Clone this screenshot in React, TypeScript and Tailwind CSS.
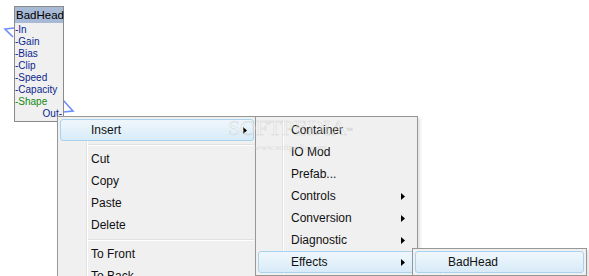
import React from 'react';

type Item = { label?: string; sep?: boolean; arrow?: boolean; active?: boolean };

const MAIN: Item[] = [
  { label: 'Insert', arrow: true, active: true },
  { sep: true },
  { label: 'Cut' },
  { label: 'Copy' },
  { label: 'Paste' },
  { label: 'Delete' },
  { sep: true },
  { label: 'To Front' },
  { label: 'To Back' },
];

const INSERT: Item[] = [
  { label: 'Container' },
  { label: 'IO Mod' },
  { label: 'Prefab...' },
  { label: 'Controls', arrow: true },
  { label: 'Conversion', arrow: true },
  { label: 'Diagnostic', arrow: true },
  { label: 'Effects', arrow: true, active: true },
];

const EFFECTS: Item[] = [{ label: 'BadHead', active: true }];

const PORTS = [
  { name: '-In', color: 'text-[#0c1f8e]' },
  { name: '-Gain', color: 'text-[#0c1f8e]' },
  { name: '-Bias', color: 'text-[#0c1f8e]' },
  { name: '-Clip', color: 'text-[#0c1f8e]' },
  { name: '-Speed', color: 'text-[#0c1f8e]' },
  { name: '-Capacity', color: 'text-[#0c1f8e]' },
  { name: '-Shape', color: 'text-[#138a13]' },
];

function Arrow() {
  return (
    <svg width="4" height="7" viewBox="0 0 4 7" className="shrink-0">
      <path d="M0 0 L4 3.5 L0 7 Z" fill="#000" />
    </svg>
  );
}

function Menu({ items, gutter, textPad, arrowPad, className }: {
  items: Item[];
  gutter: number;
  textPad: number;
  arrowPad: string;
  className: string;
}) {
  return (
    <div className={`absolute border border-[#979797] bg-[#f0f0f0] p-[2px] shadow-[2px_2px_3px_rgba(0,0,0,0.12)] ${className}`}>
      {/* gutter line */}
      <div className="absolute top-[2px] bottom-0 w-[2px] border-l border-[#e2e3e3]" style={{ left: gutter }}>
        <div className="h-full w-px bg-white" />
      </div>
      <div className="relative flex flex-col">
        {items.map((it, i) =>
          it.sep ? (
            <div key={i} className="flex h-[7px] items-center" style={{ paddingLeft: gutter }}>
              <div className="w-full border-t border-[#e0e0e0] border-b border-b-white" />
            </div>
          ) : (
            <div
              key={i}
              className={`flex h-[22px] items-center rounded-[3px] border ${
                it.active
                  ? 'border-[#a8d3ee] bg-gradient-to-b from-[#f0f7fc] to-[#d8ebf8]'
                  : 'border-transparent'
              }`}
            >
              <span
                className="flex-1 text-[12px] text-[#111] leading-none"
                style={{ paddingLeft: textPad, fontFamily: '"Liberation Sans", Arial, sans-serif' }}
              >
                {it.label}
              </span>
              {it.arrow && (
                <span className={arrowPad}>
                  <Arrow />
                </span>
              )}
            </div>
          )
        )}
      </div>
    </div>
  );
}

export default function App() {
  return (
    <div className="relative h-[276px] w-[589px] overflow-hidden bg-white">
      {/* connector wires */}
      <svg className="absolute left-0 top-0" width="80" height="120" viewBox="0 0 80 120">
        <polyline points="14,28 5,29 13,37" fill="none" stroke="#6d8cf5" strokeWidth="1.6" />
        <polyline points="63,100 73,111 63,112" fill="none" stroke="#6d8cf5" strokeWidth="1.6" />
      </svg>

      {/* node box */}
      <div
        className="absolute left-[14px] top-[6px] flex w-[50px] flex-col border border-[#8a8a8a] bg-[#f0f0f0]"
        style={{ fontFamily: '"Liberation Sans", Arial, sans-serif' }}
      >
        <div className="h-[16px] bg-[#a7b9d4] pl-px text-[11.5px] leading-[16px] text-black">BadHead</div>
        <div className="flex flex-col pb-[1px] pt-[1px]">
          {PORTS.map((p) => (
            <div key={p.name} className={`h-[12px] text-[10px] leading-[12px] ${p.color}`}>
              {p.name}
            </div>
          ))}
          <div className="h-[12px] pr-px text-right text-[10px] leading-[12px] text-[#0c1f8e]">Out-</div>
        </div>
      </div>

      <Menu items={MAIN} gutter={28} textPad={30} arrowPad="pr-[6px]" className="left-[57px] top-[116px] z-10 w-[200px]" />
      <Menu items={INSERT} gutter={26} textPad={32} arrowPad="pr-[9px]" className="left-[255px] top-[116px] z-20 w-[163px]" />
      <Menu items={EFFECTS} gutter={28} textPad={32} arrowPad="pr-[9px]" className="left-[412px] top-[248px] z-30 w-[175px]" />

      {/* watermark */}
      <div className="pointer-events-none absolute left-[228px] top-[117px] z-40 flex flex-col items-center">
        <div
          className="text-[22px] leading-none text-white/40"
          style={{ fontFamily: '"Liberation Serif", serif', WebkitTextStroke: '0.6px rgba(175,175,175,0.4)' }}
        >
          SOFTPEDIA<sup className="text-[6px]">™</sup>
        </div>
        <div
          className="mt-[4px] text-[9px] leading-none text-[#c8c8c8]/50"
          style={{ fontFamily: '"Liberation Serif", serif' }}
        >
          www.softpedia.com
        </div>
      </div>
    </div>
  );
}
